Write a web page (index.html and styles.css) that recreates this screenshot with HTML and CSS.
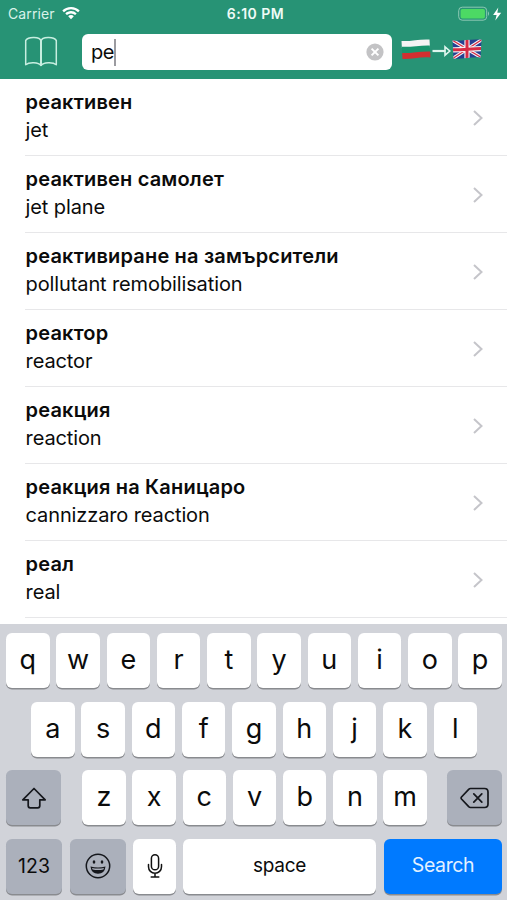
FILE: index.html
```html
<!DOCTYPE html>
<html lang="bg">
<head>
<meta charset="utf-8">
<meta name="viewport" content="width=device-width, initial-scale=1">
<title>Речник</title>
<link rel="stylesheet" href="styles.css">
</head>
<body>
<div class="screen">
  <header class="header">
    <div class="status">
      <div class="carrier"><span>Carrier</span>
        <svg width="18" height="13" viewBox="0 0 18 13" fill="#fff"><path d="M9 0C5.600 0 2.500 1.300.3 3.500l1.600 1.700A10 10 0 0 1 9 2.300a10 10 0 0 1 7.100 2.900l1.600-1.700A12.400 12.400 0 0 0 9 0z"/><path d="M9 4.100c-2.200 0-4.200.9-5.700 2.300L4.900 8A5.900 5.900 0 0 1 9 6.400 5.900 5.900 0 0 1 13.100 8l1.600-1.600A8.200 8.200 0 0 0 9 4.100z"/><path d="M9 8.100c-1.100 0-2.100.4-2.800 1.100L9 12.200l2.800-3A4 4 0 0 0 9 8.100z"/></svg>
      </div>
      <span class="time">6:10 PM</span>
      <div class="power">
        <svg width="45" height="16" viewBox="0 0 45 16"><rect x=".7" y="1.200" width="28" height="13" rx="3.500" fill="none" stroke="#8dc9b4" stroke-width="1"/><rect x="2.600" y="3" width="24.300" height="9.400" rx="1.700" fill="#4cd964"/><path d="M30 5.300q2.200 2.400 0 4.800z" fill="#8dc9b4"/><path d="M40.300 1.500 35.100 8.900h3.500l-1.300 5.500 5.900-7.700h-3.900z" fill="#fff"/></svg>
      </div>
    </div>
    <div class="toolbar">
      <svg class="book" width="34" height="32" viewBox="0 0 34 32" fill="none" stroke="#c7eee0" stroke-width="1.500" stroke-linejoin="round"><path d="M17 5C16 .8 4.500.3 1.700 4.500V28.800c3.300-3 13-2.700 15.300.7 2.300-3.400 12-3.700 15.300-.7V4.500C29.500.3 18 .8 17 5z"/><path d="M17 5v25" stroke-width="2"/></svg>
      <div class="search"><span class="query">ре</span><i class="caret"></i>
        <svg class="clear" width="18" height="18" viewBox="0 0 18 18"><circle cx="9" cy="9" r="8.600" fill="#c3c3c5"/><path d="m5.600 5.600 6.800 6.800m0-6.800-6.800 6.800" stroke="#fff" stroke-width="2"/></svg>
      </div>
      <svg class="langs" width="82" height="24" viewBox="0 0 82 24">
        <defs>
          <clipPath id="bg"><path d="M.5 3C10 3.500 19 .8 28.500 1.500L29.500 19.500C19 18.500 10 21.500 1.500 21z"/></clipPath>
          <clipPath id="gb"><path d="M51.500 2.500C61 3.500 70 .8 80.500 1.800L79.500 19.500C70 18.500 61 21.500 52.500 20.500z"/></clipPath>
        </defs>
        <g clip-path="url(#bg)"><path fill="#f4f4f4" d="M0 0h30v10H0z"/><path fill="#18946d" d="M0 8.700C10 9.400 19 7 30 7.500V17H0z"/><path fill="#d22f30" d="M0 15C10 15.600 19 13 30 13.500V24H0z"/></g>
        <path d="M31.500 13h13" stroke="#dff6ee" stroke-width="2.200"/><path d="M44 8.800 48.800 13 44 17.200z" fill="none" stroke="#dff6ee" stroke-width="1.600"/>
        <g clip-path="url(#gb)"><path fill="#263f91" d="M51 0h31v24H51z"/><path d="m51 2 30 18M51 21 81 1.500" stroke="#f3f3f6" stroke-width="3.400"/><path d="m51 2 30 18M51 21 81 1.500" stroke="#d62b43" stroke-width="1.200"/><path d="M66 0v24M51 11.800c10 .3 20-1.300 30-1.200" stroke="#f3f3f6" stroke-width="5.200" fill="none"/><path d="M66 0v24M51 11.800c10 .3 20-1.300 30-1.200" stroke="#d62b43" stroke-width="3" fill="none"/></g>
      </svg>
    </div>
  </header>
  <main class="results">
    <div class="row"><div><b>реактивен</b><p>jet</p></div><svg class="chev" viewBox="0 0 12 18"><path d="m2 2 7.500 7L2 16"/></svg></div>
    <div class="row"><div><b>реактивен самолет</b><p>jet plane</p></div><svg class="chev" viewBox="0 0 12 18"><path d="m2 2 7.500 7L2 16"/></svg></div>
    <div class="row"><div><b>реактивиране на замърсители</b><p>pollutant remobilisation</p></div><svg class="chev" viewBox="0 0 12 18"><path d="m2 2 7.500 7L2 16"/></svg></div>
    <div class="row"><div><b>реактор</b><p>reactor</p></div><svg class="chev" viewBox="0 0 12 18"><path d="m2 2 7.500 7L2 16"/></svg></div>
    <div class="row"><div><b>реакция</b><p>reaction</p></div><svg class="chev" viewBox="0 0 12 18"><path d="m2 2 7.500 7L2 16"/></svg></div>
    <div class="row"><div><b>реакция на Каницаро</b><p>cannizzaro reaction</p></div><svg class="chev" viewBox="0 0 12 18"><path d="m2 2 7.500 7L2 16"/></svg></div>
    <div class="row"><div><b>реал</b><p>real</p></div><svg class="chev" viewBox="0 0 12 18"><path d="m2 2 7.500 7L2 16"/></svg></div>
  </main>
  <section class="keyboard">
    <div class="keys"><span class="key">q</span><span class="key">w</span><span class="key">e</span><span class="key">r</span><span class="key">t</span><span class="key">y</span><span class="key">u</span><span class="key">i</span><span class="key">o</span><span class="key">p</span></div>
    <div class="keys second"><span class="key">a</span><span class="key">s</span><span class="key">d</span><span class="key">f</span><span class="key">g</span><span class="key">h</span><span class="key">j</span><span class="key">k</span><span class="key">l</span></div>
    <div class="keys third">
      <span class="key dark shift"><svg width="26" height="24" viewBox="0 0 26 24" fill="none" stroke="#15171c" stroke-width="1.700" stroke-linejoin="round"><path d="M13 2.500 1.800 13.800h5.400v6q0 2 2 2h7.600q2 0 2-2v-6h5.400z"/></svg></span>
      <span class="key">z</span><span class="key">x</span><span class="key">c</span><span class="key">v</span><span class="key">b</span><span class="key">n</span><span class="key">m</span>
      <span class="key dark del"><svg width="30" height="22" viewBox="0 0 30 22" fill="none" stroke="#15171c" stroke-width="1.700" stroke-linejoin="round" stroke-linecap="round"><path d="M10.500 1.500h14q3.500 0 3.500 3.500v12q0 3.500-3.500 3.500h-14q-1 0-1.800-.8L1.500 12q-.8-1 0-2l7.200-7.700q.8-.8 1.800-.8zM13.800 6.800l8 8.400m0-8.400-8 8.400"/></svg></span>
    </div>
    <div class="keys fourth">
      <span class="key dark num">123</span>
      <span class="key dark emoji"><svg width="26" height="26" viewBox="0 0 26 26"><circle cx="13" cy="13" r="11.700" fill="none" stroke="#15171c" stroke-width="1.500"/><ellipse cx="9" cy="9" rx="1.300" ry="1.700" fill="#15171c"/><ellipse cx="17" cy="9" rx="1.300" ry="1.700" fill="#15171c"/><path d="M5.500 13.500q7.500 1.800 15 0-.8 7.200-7.500 7.200t-7.500-7.200z" fill="#15171c"/><path d="M7 14.900q6 1.200 12 0l-.6 1.700q-5.400 1-10.800 0z" fill="#a9aeb9"/></svg></span>
      <span class="key mic"><svg width="16" height="26" viewBox="0 0 16 26" fill="none" stroke="#111" stroke-width="1.500" stroke-linecap="round"><rect x="4.400" y="1.800" width="7.200" height="15" rx="3.600"/><path d="M1.500 11.500v2.300a6.500 6.500 0 0 0 13 0v-2.300M8 20.300V24M4.200 24h7.600"/></svg></span>
      <span class="key space">space</span>
      <span class="key go">Search</span>
    </div>
  </section>
</div>
</body>
</html>
```
FILE: styles.css
```css
* { box-sizing: border-box; }
body { margin: 0; background: #fff; font-family: Inter, "Liberation Sans", sans-serif; color: #0b0b0b; }
.screen { width: 507px; height: 900px; overflow: hidden; display: flex; flex-direction: column; }
svg { display: block; flex: none; }

.header { height: 79px; flex: none; background: #279375; }
.status { height: 27px; display: grid; grid-template-columns: 1fr auto 1fr; align-items: center; padding: 0 4px 0 8px; color: #fff; }
.carrier { display: flex; align-items: center; gap: 7px; font-size: 14px; letter-spacing: .1px; color: #d9f2e9; }
.time { font-size: 14px; font-weight: 600; letter-spacing: .5px; color: #effbf7; }
.power { display: flex; justify-content: flex-end; }
.toolbar { display: flex; align-items: center; height: 50px; padding: 0 24px; }
.search { width: 310px; height: 36px; margin-left: 24px; padding: 0 8px 0 9px; background: #fff; border-radius: 6px; display: flex; align-items: center; font-size: 20px; }
.query { letter-spacing: -.4px; }
.caret { width: 2px; height: 27px; background: #9b9ba0; }
.clear { margin-left: auto; }
.langs { margin: -4px 0 0 9px; }

.results { height: 545px; flex: none; padding-left: 25px; overflow: hidden; }
.row { height: 77px; display: flex; align-items: center; justify-content: space-between; border-bottom: 1px solid #e7e7e9; padding: 0 23px 0 .6px; }
.row b, .row p { display: block; margin: 0; height: 28px; line-height: 28px; font-size: 20px; white-space: nowrap; }
.row div { padding-bottom: 2px; }
.row b { font-weight: 600; letter-spacing: .18px; }
.row p { letter-spacing: -.12px; }
.chev { width: 12px; height: 18px; margin-top: 1px; fill: none; stroke: #c5c5ca; stroke-width: 2; }

.keyboard { flex: 1; background: #d1d3d9; padding: 9px 5px 0 6px; }
.keys { display: flex; justify-content: space-between; height: 56px; margin-bottom: 12.600px; }
.key { width: 43.500px; height: 55px; display: flex; align-items: center; justify-content: center; background: #fff; border-radius: 6px; box-shadow: 0 1.500px 0 #898b8f; font-size: 27px; font-weight: 400; padding-bottom: 2px; color: #0b0b0b; }
.second { padding: 0 25px; }
.third { justify-content: flex-start; gap: 6.700px; }
.dark { background: #abb0bb; padding: 0; }
.shift { width: 55px; margin-right: 14.500px; }
.del { width: 55px; margin-left: auto; }
.fourth { justify-content: flex-start; }
.num { width: 56px; font-size: 19.500px; margin-right: 8px; }
.emoji { width: 56px; margin-right: 7px; }
.mic { width: 43px; padding: 0; margin-right: 7px; }
.space { width: 193px; font-size: 19px; letter-spacing: -.3px; margin-right: 8px; }
.go { width: 118px; font-size: 19.500px; letter-spacing: -.4px; background: #007aff; color: #e3f1ff; }
```
